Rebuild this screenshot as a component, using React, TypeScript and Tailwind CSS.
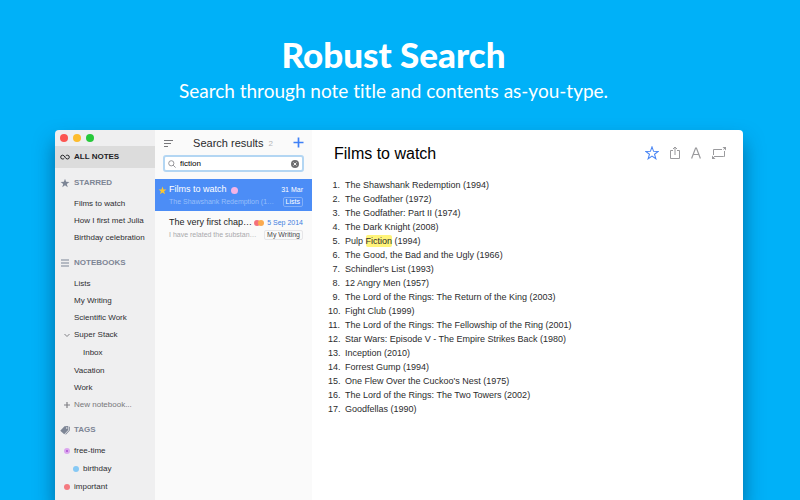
import React, { useState } from 'react';

interface Film {
  title: string;
  year: number;
}

const FILMS: Film[] = [
  { title: 'The Shawshank Redemption', year: 1994 },
  { title: 'The Godfather', year: 1972 },
  { title: 'The Godfather: Part II', year: 1974 },
  { title: 'The Dark Knight', year: 2008 },
  { title: 'Pulp Fiction', year: 1994 },
  { title: 'The Good, the Bad and the Ugly', year: 1966 },
  { title: "Schindler's List", year: 1993 },
  { title: '12 Angry Men', year: 1957 },
  { title: 'The Lord of the Rings: The Return of the King', year: 2003 },
  { title: 'Fight Club', year: 1999 },
  { title: 'The Lord of the Rings: The Fellowship of the Ring', year: 2001 },
  { title: 'Star Wars: Episode V - The Empire Strikes Back', year: 1980 },
  { title: 'Inception', year: 2010 },
  { title: 'Forrest Gump', year: 1994 },
  { title: "One Flew Over the Cuckoo's Nest", year: 1975 },
  { title: 'The Lord of the Rings: The Two Towers', year: 2002 },
  { title: 'Goodfellas', year: 1990 },
];

const STAR_PATH =
  'M8 1l1.800 5.100 5.300.1-4.200 3.200 1.500 5.200L8 11.500l-4.400 3.100 1.500-5.200L.9 6.200l5.300-.1z';

const InfinityIcon = () => (
  <svg className="h-[10px] w-[10px]" viewBox="0 0 20 20" fill="none" stroke="currentColor" strokeWidth="2">
    <path d="M8.500 12.500C7.500 13.600 6.500 14 5.200 14a3.800 3.800 0 0 1 0-7.600c4.800 0 4.800 7.600 9.600 7.600a3.800 3.800 0 0 0 0-7.600c-1.300 0-2.300.4-3.300 1.500" />
  </svg>
);

const StarIcon = ({ className }: { className: string }) => (
  <svg className={className} viewBox="0 0 16 16" fill="currentColor">
    <path d={STAR_PATH} />
  </svg>
);

const LinesIcon = () => (
  <svg className="h-[10px] w-[10px]" viewBox="0 0 10 10" stroke="currentColor" strokeWidth="1.2">
    <path d="M1 2h8M1 5h8M1 8h8" />
  </svg>
);

const TagIcon = () => (
  <svg className="h-[10px] w-[10px]" viewBox="0 0 20 20" fill="currentColor" fillRule="evenodd">
    <path d="M9 2.500l7-.5.800.8-.3 7.200-8 8.500-8-7zM13.500 4.300a1.500 1.500 0 1 0 0 3 1.500 1.500 0 0 0 0-3z" />
    <path d="M18 3l1.700 1-.2 7.200-7.500 8-1.800-.7 7.600-8z" />
  </svg>
);

interface SectionProps {
  title: string;
  icon: React.ReactNode;
  children: React.ReactNode;
}

const Section = ({ title, icon, children }: SectionProps) => (
  <section className="pt-[5px] pb-[2px]">
    <h2 className="flex h-[20px] items-center gap-[4px] pl-[5px] font-bold text-[#7d8595]">
      {icon}
      {title}
    </h2>
    <ul className="pt-[2px]">{children}</ul>
  </section>
);

interface RowProps {
  label: string;
  marker?: React.ReactNode;
  muted?: boolean;
  children?: React.ReactNode;
}

const Row = ({ label, marker, muted, children }: RowProps) => (
  <li>
    <a href="#" className={`flex h-[17px] items-center whitespace-nowrap ${muted ? 'text-[#77777a]' : 'text-[#2e2e30]'}`}>
      <span className="flex w-[19px] shrink-0 justify-center pl-[4px] text-[#808085]">{marker}</span>
      {label}
    </a>
    {children && <ul className="py-px pl-[9px]">{children}</ul>}
  </li>
);

const Sidebar = () => (
  <nav className="w-[100px] shrink-0 overflow-hidden rounded-tl-[4px] bg-[#efeff0] text-[8px]">
    <div className="flex h-[16px] items-center gap-[5px] pl-[5px]">
      <span className="h-[8px] w-[8px] rounded-full bg-[#fc5652]" />
      <span className="h-[8px] w-[8px] rounded-full bg-[#fdbc2e]" />
      <span className="h-[8px] w-[8px] rounded-full bg-[#27c93b]" />
    </div>
    <a href="#" className="flex h-[22px] items-center gap-[4px] bg-[#dcdcdc] pl-[5px] font-bold text-[#222225]">
      <InfinityIcon />
      ALL NOTES
    </a>
    <Section title="STARRED" icon={<StarIcon className="h-[10px] w-[10px]" />}>
      <Row label="Films to watch" />
      <Row label="How I first met Julia" />
      <Row label="Birthday celebration" />
    </Section>
    <Section title="NOTEBOOKS" icon={<LinesIcon />}>
      <Row label="Lists" />
      <Row label="My Writing" />
      <Row label="Scientific Work" />
      <Row
        label="Super Stack"
        marker={
          <svg className="h-[6px] w-[6px]" viewBox="0 0 6 6" fill="none" stroke="currentColor">
            <path d="M.5 2L3 4.500 5.500 2" />
          </svg>
        }
      >
        <Row label="Inbox" />
      </Row>
      <Row label="Vacation" />
      <Row label="Work" />
      <Row
        label="New notebook..."
        muted
        marker={
          <svg className="h-[6px] w-[6px]" viewBox="0 0 6 6" fill="none" stroke="currentColor" strokeWidth="1.2">
            <path d="M3 0v6M0 3h6" />
          </svg>
        }
      />
    </Section>
    <Section title="TAGS" icon={<TagIcon />}>
      <Row
        label="free-time"
        marker={
          <span className="flex h-[6px] w-[6px] items-center justify-center rounded-full bg-[#dba5ee]">
            <span className="h-[2px] w-[2px] rounded-full bg-[#a94fd0]" />
          </span>
        }
      >
        <Row label="birthday" marker={<span className="h-[6px] w-[6px] rounded-full bg-[#86c9f5]" />} />
      </Row>
      <Row label="important" marker={<span className="h-[6px] w-[6px] rounded-full bg-[#f47a80]" />} />
    </Section>
  </nav>
);

const NoteList = () => {
  const [query, setQuery] = useState('fiction');

  return (
    <section className="w-[157px] shrink-0 bg-[#fafafa]">
      <header className="flex h-[25px] items-center pr-[8px] pl-[9px]">
        <button aria-label="Sort" className="text-[#77777a]">
          <svg className="h-[8px] w-[9px]" viewBox="0 0 9 8" stroke="currentColor">
            <path d="M0 1.500h9M0 4.500h7M0 7.500h4" />
          </svg>
        </button>
        <h2 className="flex flex-1 items-center justify-center gap-[5px] pt-[2px] text-[11px] text-[#2a2a2c]">
          Search results
          <span className="text-[8px] text-[#b5b5b8]">2</span>
        </h2>
        <button aria-label="New note" className="text-[#3f80f6]">
          <svg className="h-[11px] w-[11px]" viewBox="0 0 11 11" stroke="currentColor" strokeWidth="1.700">
            <path d="M5.500 .5v10M.5 5.500h10" />
          </svg>
        </button>
      </header>
      <div className="px-[8px] pb-[7px]">
        <div className="flex h-[17px] items-center gap-[4px] rounded-[3px] border-2 border-[#b3d6f3] bg-white px-[3px]">
          <svg className="h-[8px] w-[8px] text-[#808085]" viewBox="0 0 8 8" fill="none" stroke="currentColor" strokeWidth=".8">
            <circle cx="3.300" cy="3.300" r="2.600" />
            <path d="M5.200 5.200L7.600 7.600" />
          </svg>
          <input
            type="text"
            aria-label="Search notes"
            value={query}
            onChange={(e) => setQuery(e.target.value)}
            className="min-w-0 flex-1 text-[8px] leading-[12px] text-black outline-none"
          />
          <button aria-label="Clear search" onClick={() => setQuery('')}>
            <svg className="h-[8px] w-[8px]" viewBox="0 0 8 8">
              <circle cx="4" cy="4" r="4" fill="#6e6e70" />
              <path d="M2.500 2.500l3 3M5.500 2.500l-3 3" stroke="white" strokeWidth=".9" />
            </svg>
          </button>
        </div>
      </div>
      <ul className="whitespace-nowrap">
        <li className="bg-[#4c8df6] pt-[5px] pr-[9px] pb-[3px] text-white">
          <div className="flex h-[12px] items-center">
            <span className="flex w-[14px] shrink-0 justify-center">
              <StarIcon className="h-[9px] w-[9px] text-[#fdc62f]" />
            </span>
            <h3 className="text-[9px]">Films to watch</h3>
            <span className="ml-[4px] h-[7px] w-[7px] rounded-full bg-[#f5b3e6]" />
            <time className="ml-auto text-[7px]">31 Mar</time>
          </div>
          <div className="flex h-[12px] items-center justify-between pl-[14px]">
            <p className="text-[7px] text-[#97bffb]">The Shawshank Redemption (1…</p>
            <span className="rounded-[2px] border border-[#82aff8] px-[2px] text-[7px] leading-[8px]">Lists</span>
          </div>
        </li>
        <li className="pt-[6px] pr-[9px]">
          <div className="flex h-[12px] items-center pl-[14px]">
            <h3 className="text-[9px] text-[#252527]">The very first chap…</h3>
            <span className="ml-auto h-[6px] w-[6px] rounded-full bg-[#f4717c]" />
            <span className="-ml-[2px] h-[6px] w-[6px] rounded-full bg-[#fbaa4e]" />
            <time className="ml-[3px] text-[7px] text-[#3f80e0]">5 Sep 2014</time>
          </div>
          <div className="flex h-[12px] items-center justify-between pl-[14px]">
            <p className="text-[7px] text-[#a9a9ac]">I have related the substan…</p>
            <span className="rounded-[2px] border border-[#e6e6e8] px-[2px] text-[7px] leading-[8px] text-[#4a4a4d]">My Writing</span>
          </div>
        </li>
      </ul>
    </section>
  );
};

const Highlighted = ({ text }: { text: string }) => {
  const parts = text.split(/(Fiction)/);
  return (
    <>
      {parts.map((part, i) =>
        part === 'Fiction' ? (
          <mark key={i} className="rounded-[2px] bg-[#fff47a] py-px text-inherit">
            {part}
          </mark>
        ) : (
          part
        ),
      )}
    </>
  );
};

const Note = () => (
  <article className="min-w-0 flex-1 rounded-tr-[4px] bg-white px-[16px]">
    <header className="flex h-[46px] items-center justify-between pl-[6px]">
      <h2 className="pt-px text-[16px] text-black">Films to watch</h2>
      <div className="flex items-center gap-[10px] text-[#9a9a9d]">
        <button aria-label="Star" className="text-[#4a86f4]">
          <svg className="h-[14px] w-[14px]" viewBox="0 0 16 16" fill="none" stroke="currentColor" strokeWidth="1.200">
            <path d={STAR_PATH} />
          </svg>
        </button>
        <button aria-label="Share">
          <svg className="h-[14px] w-[12px]" viewBox="0 0 12 14" fill="none" stroke="currentColor">
            <path d="M4 4.500H1.500v8h9v-8H8M6 9V1M4 3l2-2 2 2" />
          </svg>
        </button>
        <button aria-label="Text style">
          <svg className="h-[12px] w-[10px]" viewBox="0 0 10 12" fill="none" stroke="currentColor" strokeWidth="1.200">
            <path d="M.6 11.500L4.600 1h.8l4 10.500M2.200 7.500h5.600" />
          </svg>
        </button>
        <button aria-label="Full screen">
          <svg className="h-[14px] w-[16px]" viewBox="0 0 16 14" fill="none" stroke="currentColor">
            <path d="M12.500 10.500H4M2.500 9V3.500H11M13.500 5v5.500h-1" />
            <path d="M1 9.500V13h3.500zM15 4.500V1h-3.500z" fill="currentColor" stroke="none" />
            <path d="M2 12l2-2M12.500 3.500l1.500-1.500" />
          </svg>
        </button>
      </div>
    </header>
    <ol className="pt-[2px] text-[9px] leading-[14px] text-[#2c2c2e]">
      {FILMS.map((film, i) => (
        <li key={film.title} className="flex gap-[5px]">
          <span className="w-[12px] text-right">{i + 1}.</span>
          <span>
            <Highlighted text={film.title} /> ({film.year})
          </span>
        </li>
      ))}
    </ol>
  </article>
);

export default function App() {
  return (
    <main className="flex h-screen flex-col overflow-hidden bg-[#00b1f8] font-['Liberation_Sans',sans-serif]">
      <header className="flex flex-col items-center pt-[34px] pr-[13px] pb-[24px] font-['Lato',sans-serif] text-white [font-variant-ligatures:none]">
        <h1 className="text-[35px] leading-[40px] font-black">Robust Search</h1>
        <p className="pt-[2px] text-[19px] leading-[30px]">Search through note title and contents as-you-type.</p>
      </header>
      <div className="mr-[57px] ml-[55px] flex min-h-0 flex-1 rounded-t-[4px] shadow-[0_12px_20px_rgba(0,40,75,0.5)]">
        <Sidebar />
        <NoteList />
        <Note />
      </div>
    </main>
  );
}
